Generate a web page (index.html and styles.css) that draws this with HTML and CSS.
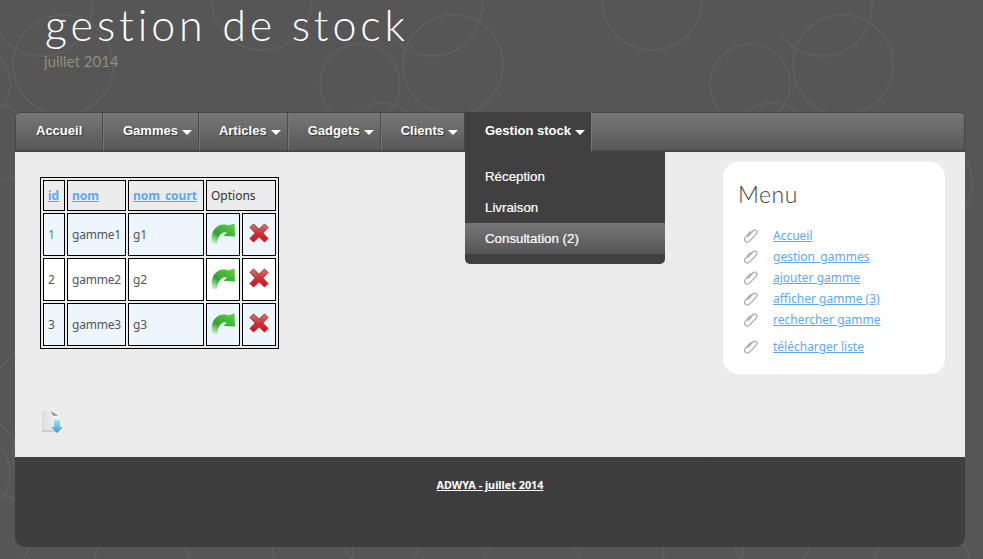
FILE: index.html
```html
<!DOCTYPE html>
<html lang="fr">
<head>
<meta charset="utf-8">
<title>gestion de stock</title>
<link rel="stylesheet" href="styles.css">
</head>
<body>
<svg class="defs" width="0" height="0" aria-hidden="true">
  <defs>
    <linearGradient id="gr" x1="0.8" y1="0" x2="0.05" y2="1">
      <stop offset="0" stop-color="#5ccb45"/><stop offset="0.6" stop-color="#2fa52c"/><stop offset="1" stop-color="#e8f6e4"/>
    </linearGradient>
    <linearGradient id="rd" x1="0" y1="0" x2="0" y2="1">
      <stop offset="0" stop-color="#d97a76"/><stop offset="0.5" stop-color="#d0303a"/><stop offset="1" stop-color="#d80d12"/>
    </linearGradient>
    <linearGradient id="bl" x1="0" y1="0" x2="0" y2="1">
      <stop offset="0" stop-color="#a9e0f5"/><stop offset="1" stop-color="#2b9fdc"/>
    </linearGradient>
    <linearGradient id="pg" x1="0" y1="0" x2="1" y2="0">
      <stop offset="0" stop-color="#dcdcdc"/><stop offset="1" stop-color="#f5f5f5"/>
    </linearGradient>
    <symbol id="arrow" viewBox="0 0 24 21">
      <path fill="url(#gr)" d="M1 21C-1 10 4 1.500 13 1.500c2 0 3 .3 4 1L23.500 .5 24 13.500 12.500 13l3.500-3.500C11 8 7 12 6 21z"/>
    </symbol>
    <symbol id="cross" viewBox="0 0 20 20">
      <path fill="url(#rd)" stroke="#a5262a" stroke-width="1" d="M4.500 1 10 6.300 15.500 1 19 4.500 13.700 10 19 15.500 15.500 19 10 13.700 4.500 19 1 15.500 6.300 10 1 4.500z"/>
    </symbol>
    <symbol id="clip" viewBox="0 0 16 16">
      <path fill="none" stroke="#aaa" stroke-width="1.300" d="M5 9.500 10.500 3.200c1.200-1.300 3-1.300 3.800-.4.900.9.800 2.500-.3 3.700L7.500 13.500c-1.500 1.600-3.700 1.700-4.900.6-1.200-1.100-1-3.200.3-4.700L8.500 3.500"/>
    </symbol>
  </defs>
</svg>
<div class="page">
  <header class="masthead">
    <h1 class="title">gestion de stock</h1>
    <p class="tagline">juillet 2014</p>
  </header>
  <nav class="nav">
    <a class="nav-item nav-first" href="#">Accueil</a>
    <a class="nav-item has-caret" href="#">Gammes</a>
    <a class="nav-item has-caret" href="#">Articles</a>
    <a class="nav-item has-caret" href="#">Gadgets</a>
    <a class="nav-item has-caret" href="#">Clients</a>
    <div class="nav-open">
      <a class="nav-item has-caret active" href="#">Gestion stock</a>
      <ul class="dropdown">
        <li><a href="#">Réception</a></li>
        <li><a href="#">Livraison</a></li>
        <li><a class="current" href="#">Consultation (2)</a></li>
      </ul>
    </div>
  </nav>
  <main class="main">
    <div class="content">
      <table class="grid">
        <thead>
          <tr>
            <th class="col-id"><a href="#">id</a></th>
            <th class="col-nom"><a href="#">nom</a></th>
            <th class="col-court"><a href="#">nom_court</a></th>
            <th class="col-opt" colspan="2">Options</th>
          </tr>
        </thead>
        <tbody>
          <tr class="odd">
            <td class="blue">1</td><td>gamme1</td><td>g1</td>
            <td class="ico"><svg class="i-arrow"><use href="#arrow"/></svg></td>
            <td class="ico"><svg class="i-cross"><use href="#cross"/></svg></td>
          </tr>
          <tr>
            <td>2</td><td>gamme2</td><td>g2</td>
            <td class="ico"><svg class="i-arrow"><use href="#arrow"/></svg></td>
            <td class="ico"><svg class="i-cross"><use href="#cross"/></svg></td>
          </tr>
          <tr class="odd">
            <td>3</td><td>gamme3</td><td>g3</td>
            <td class="ico"><svg class="i-arrow"><use href="#arrow"/></svg></td>
            <td class="ico"><svg class="i-cross"><use href="#cross"/></svg></td>
          </tr>
        </tbody>
      </table>
      <a class="download" href="#" aria-label="télécharger">
        <svg width="24" height="24" viewBox="0 0 24 24">
          <path fill="url(#pg)" d="M2 1h10l6 5v16H2z"/>
          <path fill="#8a8a8a" d="M11 1l7 5-5-.5z"/>
          <path fill="#cfcfcf" d="M2 20h16v2H2z"/>
          <path fill="url(#bl)" d="M14 10h6v7h3l-6 6-6-6h3z"/>
        </svg>
      </a>
    </div>
    <aside class="side">
      <h2 class="side-title">Menu</h2>
      <ul class="side-list">
        <li><svg class="clip"><use href="#clip"/></svg><a href="#">Accueil</a></li>
        <li><svg class="clip"><use href="#clip"/></svg><a href="#">gestion_gammes</a></li>
        <li><svg class="clip"><use href="#clip"/></svg><a href="#">ajouter gamme</a></li>
        <li><svg class="clip"><use href="#clip"/></svg><a href="#">afficher gamme (3)</a></li>
        <li><svg class="clip"><use href="#clip"/></svg><a href="#">rechercher gamme</a></li>
        <li class="extra"><svg class="clip"><use href="#clip"/></svg><a href="#">télécharger liste</a></li>
      </ul>
    </aside>
  </main>
  <footer class="foot"><a href="#">ADWYA - juillet 2014</a></footer>
</div>
</body>
</html>
```

FILE: styles.css
```css
* { box-sizing: border-box; }
html, body { margin: 0; padding: 0; }
body {
  height: 559px;
  overflow: hidden;
  font-family: "Noto Sans", "Open Sans", sans-serif;
  font-size: 12px;
  color: #555;
  background-color: #565656;
  background-image: url("data:image/svg+xml,%3Csvg xmlns='http://www.w3.org/2000/svg' width='390' height='390' fill='none' stroke='%235f5f5f' stroke-width='1.500'%3E%3Ccircle cx='63' cy='65' r='50'/%3E%3Ccircle cx='453' cy='65' r='50'/%3E%3Ccircle cx='42' cy='6' r='50'/%3E%3Ccircle cx='42' cy='396' r='50'/%3E%3Ccircle cx='262' cy='0' r='50'/%3E%3Ccircle cx='262' cy='390' r='50'/%3E%3Ccircle cx='360' cy='84' r='40'/%3E%3Ccircle cx='-30' cy='84' r='40'/%3E%3Ccircle cx='382' cy='143' r='40'/%3E%3Ccircle cx='-8' cy='143' r='40'/%3E%3Ccircle cx='142' cy='183' r='50'/%3E%3Ccircle cx='313' cy='160' r='40'/%3E%3C/svg%3E");
}
.defs { display: block; height: 0; }
.page { width: 950px; margin-left: 15px; }

.masthead { height: 112px; padding: 2px 0 0 30px; }
.title {
  margin: 0;
  font-family: Lato, "Open Sans", sans-serif;
  font-weight: 300;
  font-size: 43px;
  line-height: 46px;
  letter-spacing: 3.900px;
  color: #fff;
}
.tagline {
  margin: 4px 0 0 -1px;
  font-family: Lato, "Open Sans", sans-serif;
  font-weight: 400;
  font-size: 15px;
  line-height: 18px;
  color: #8f8f7a;
}

.nav {
  display: flex;
  height: 40px;
  border: 1px solid #484848;
  border-bottom-width: 2px;
  border-radius: 5px 5px 0 0;
  background: linear-gradient(#777, #585858);
  font-family: "Liberation Sans", Arial, sans-serif;
  font-weight: 700;
  font-size: 13px;
  position: relative;
}
.nav-item {
  display: flex;
  align-items: center;
  height: 37px;
  padding: 0 20px 2px;
  color: #fff;
  text-decoration: none;
  text-shadow: 1px 1px 1px #333;
  border-right: 1px solid #4a4a4a;
  box-shadow: 1px 0 0 #777;
}
.nav-first { width: 87px; }
.has-caret { padding-right: 6px; }
.has-caret::after {
  content: "";
  width: 0;
  height: 0;
  margin: 3px 0 0 4px;
  border: 5px solid transparent;
  border-top-color: #fff;
  border-bottom-width: 0;
}
.nav-open { position: relative; }
.nav-item.active {
  height: 39px;
  margin: -1px 0 -1px;
  background: #404040;
  border-right: 1px solid #777;
  box-shadow: none;
  text-shadow: none;
}
.dropdown {
  position: absolute;
  left: 0;
  top: 38px;
  z-index: 2;
  width: 200px;
  margin: 0;
  padding: 10px 0 10px;
  list-style: none;
  background: #404040;
  border-radius: 0 0 5px 5px;
}
.dropdown a {
  display: block;
  height: 31px;
  line-height: 31px;
  padding-left: 20px;
  color: #fff;
  font-weight: 400;
  font-size: 13.300px;
  text-decoration: none;
  -webkit-text-stroke: 0.2px #fff;
}
.dropdown .current { background: linear-gradient(#777, #555); }

.main {
  display: flex;
  align-items: flex-start;
  height: 305px;
  background: #ececec;
}
.content { flex: 1; padding: 25px 0 0 25px; }
.grid {
  border: 1px solid #000;
  border-collapse: separate;
  border-spacing: 2px;
  table-layout: fixed;
  width: 239px;
}
.grid th, .grid td {
  border: 1px solid #000;
  padding: 0 0 1px 4px;
  text-align: left;
  font-weight: 400;
}
.grid th { height: 31px; color: #333; }
.grid td { height: 43px; letter-spacing: -0.200px; }
.grid th a { color: #5aa9f5; font-weight: 700; }
.col-id { width: 22px; }
.col-nom { width: 59px; }
.col-court { width: 76px; }
.odd td { background: #edf5fd; }
.grid tr:not(.odd) td { background: #fff; }
.grid .blue { color: #3d8fb0; }
.grid .ico { width: 34px; padding: 0 0 3px; line-height: 0; }
.i-arrow { display: block; width: 24px; height: 21px; margin: 0 auto; }
.i-cross { display: block; width: 20px; height: 20px; margin: 0 auto; }
.download { display: block; width: 24px; height: 24px; margin-top: 61px; filter: blur(0.4px); }

.side {
  width: 222px;
  height: 212px;
  margin: 10px 20px 0 0;
  padding: 17px 15px;
  background: #fff;
  border-radius: 15px;
}
.side-title {
  margin: 0 0 16px;
  font-family: Lato, "Open Sans", sans-serif;
  font-weight: 300;
  font-size: 23px;
  line-height: 30px;
  letter-spacing: 0.500px;
  color: #444;
}
.side-list { margin: 0; padding: 0 0 0 5px; list-style: none; }
.side-list li { display: flex; align-items: center; height: 21px; }
.side-list .extra { margin-top: 6px; }
.clip { width: 15px; height: 15px; margin-right: 15px; flex: none; }
.side-list a { color: #5aa9f5; }

.foot {
  height: 90px;
  padding-top: 19px;
  text-align: center;
  font-size: 10.800px;
  font-weight: 700;
  line-height: 17px;
  background: rgba(58, 58, 58, 0.85);
  border-radius: 0 0 10px 10px;
}
.foot a { color: #fff; }
```
